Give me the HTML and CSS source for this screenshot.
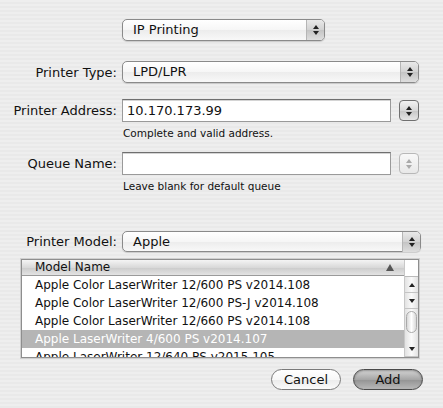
FILE: index.html
```html
<!DOCTYPE html>
<html>
<head>
<meta charset="utf-8">
<link rel="stylesheet" href="styles.css">
</head>
<body>
<div class="sheet">
  <div class="top">
    <div class="popup popup-top"><span class="popup-text">IP Printing</span><span class="popup-arrows"><i class="up"></i><i class="down"></i></span></div>
  </div>

  <div class="row row-type">
    <label class="lbl">Printer Type:</label>
    <div class="popup popup-wide"><span class="popup-text">LPD/LPR</span><span class="popup-arrows"><i class="up"></i><i class="down"></i></span></div>
  </div>

  <div class="row row-addr">
    <label class="lbl">Printer Address:</label>
    <div class="field">10.170.173.99</div>
    <div class="stepper"><i class="up"></i><i class="down"></i></div>
  </div>
  <div class="hint hint-addr">Complete and valid address.</div>

  <div class="row row-queue">
    <label class="lbl">Queue Name:</label>
    <div class="field"></div>
    <div class="stepper disabled"><i class="up"></i><i class="down"></i></div>
  </div>
  <div class="hint hint-queue">Leave blank for default queue</div>

  <div class="row row-model">
    <label class="lbl">Printer Model:</label>
    <div class="popup popup-model"><span class="popup-text">Apple</span><span class="popup-arrows"><i class="up"></i><i class="down"></i></span></div>
  </div>

  <div class="list">
    <div class="list-main">
      <div class="list-head"><span>Model Name</span><i class="sort"></i></div>
      <div class="list-rows">
        <div class="list-row">Apple Color LaserWriter 12/600 PS v2014.108</div>
        <div class="list-row">Apple Color LaserWriter 12/600 PS-J v2014.108</div>
        <div class="list-row">Apple Color LaserWriter 12/660 PS v2014.108</div>
        <div class="list-row selected">Apple LaserWriter 4/600 PS v2014.107</div>
        <div class="list-row">Apple LaserWriter 12/640 PS v2015.105</div>
      </div>
    </div>
    <div class="scrollbar">
      <div class="sb-corner"></div>
      <div class="sb-btn"><i class="up"></i></div>
      <div class="sb-btn"><i class="down"></i></div>
      <div class="sb-track"><div class="sb-thumb"></div></div>
      <div class="sb-btn"><i class="down"></i></div>
    </div>
  </div>

  <div class="buttons">
    <button class="btn cancel">Cancel</button>
    <button class="btn add">Add</button>
  </div>
</div>
</body>
</html>
```

FILE: styles.css
```css
* { box-sizing: border-box; }
html, body { margin: 0; padding: 0; }
body {
  width: 443px;
  height: 408px;
  overflow: hidden;
  font-family: "DejaVu Sans", sans-serif;
  font-size: 13px;
  color: #111;
  background: repeating-linear-gradient(to bottom, #eeeeee 0px, #eeeeee 2px, #e9e9e9 2px, #e9e9e9 4px);
}
.sheet { padding-top: 19px; }

.top { padding-left: 122px; }

.popup {
  height: 22px;
  display: flex;
  align-items: center;
  border: 1px solid #8a8a8a;
  border-radius: 5px;
  background: linear-gradient(to bottom, #ffffff 0%, #f6f6f6 50%, #ececec 51%, #f8f8f8 100%);
  box-shadow: 0 1px 1px rgba(0,0,0,0.15);
  position: relative;
}
.popup-text { flex: 1; padding-left: 10px; line-height: 20px; }
.popup-arrows {
  width: 18px;
  height: 20px;
  border-left: 1px solid #b5b5b5;
  border-radius: 0 4px 4px 0;
  background: linear-gradient(to bottom, #e9e9e9 0%, #d2d2d2 50%, #c4c4c4 51%, #dedede 100%);
  display: flex;
  flex-direction: column;
  align-items: center;
  justify-content: center;
  gap: 2px;
}
.popup-top { width: 203px; }
.popup-wide { width: 297px; }
.popup-model { width: 299px; height: 21px; }

i.up, i.down { display: block; width: 0; height: 0; border-left: 3px solid transparent; border-right: 3px solid transparent; }
i.up { border-bottom: 4px solid #222; }
i.down { border-top: 4px solid #222; }

.row { display: flex; align-items: center; }
.lbl { width: 122px; padding-right: 5px; text-align: right; white-space: nowrap; }
.row-type { margin-top: 20px; }
.row-addr { margin-top: 16px; }
.row-queue { margin-top: 11px; }
.row-model { margin-top: 37px; }

.field {
  width: 269px;
  height: 23px;
  background: #fff;
  border: 1px solid #9a9a9a;
  border-top-color: #6f6f6f;
  box-shadow: inset 0 1px 0 #d4d4d4;
  padding: 3px 0 0 4px;
  line-height: 16px;
}
.stepper {
  margin-left: 8px;
  width: 20px;
  height: 21px;
  border: 1px solid #707070;
  border-radius: 4px;
  background: linear-gradient(to bottom, #f2f2f2 0%, #d8d8d8 50%, #c6c6c6 51%, #e6e6e6 100%);
  display: flex;
  flex-direction: column;
  align-items: center;
  justify-content: center;
  gap: 2px;
}
.stepper.disabled { border-color: #b8b8b8; background: linear-gradient(to bottom, #f8f8f8, #e8e8e8); }
.stepper.disabled i.up { border-bottom-color: #aaa; }
.stepper.disabled i.down { border-top-color: #aaa; }

.hint { padding-left: 123px; font-size: 10.5px; line-height: 15px; color: #111; }
.hint-addr { margin-top: 4px; }
.hint-queue { margin-top: 4px; }

.list {
  margin: 7px 0 0 21px;
  width: 398px;
  height: 99px;
  border: 1px solid #8e8e8e;
  box-shadow: 0 0 0 1px #cfcfcf;
  background: #fff;
  display: flex;
  overflow: hidden;
}
.list-main { flex: 1; overflow: hidden; }
.list-head {
  height: 16px;
  display: flex;
  align-items: center;
  padding-left: 13px;
  padding-right: 10px;
  background: linear-gradient(to bottom, #f4f4f4 0%, #d9d9d9 50%, #cbcbcb 51%, #e3e3e3 100%);
  border-bottom: 1px solid #9a9a9a;
  font-size: 12px;
  line-height: 15px;
}
.list-head span { flex: 1; }
.sort { display: block; width: 0; height: 0; border-left: 4px solid transparent; border-right: 4px solid transparent; border-bottom: 7px solid #555; }
.list-row { height: 18px; line-height: 18px; padding-left: 13px; white-space: nowrap; font-size: 12px; }
.list-row.selected { background: #b5b5b5; color: #fff; }

.scrollbar { width: 14px; display: flex; flex-direction: column; border-left: 1px solid #c8c8c8; background: linear-gradient(to right, #e2e2e2, #fafafa 50%, #e2e2e2); }
.sb-corner { height: 17px; background: #fff; border-bottom: 1px solid #bbb; }
.sb-btn { height: 16px; display: flex; align-items: center; justify-content: center; border-bottom: 1px solid #c4c4c4; }
.sb-track { flex: 1; padding: 2px 1px; }
.sb-thumb { height: 22px; border-radius: 6px; border: 1px solid #aaa; background: linear-gradient(to right, #d8d8d8, #ffffff 50%, #d8d8d8); }

.buttons { display: flex; justify-content: flex-end; gap: 12px; padding-right: 20px; margin-top: 11px; }
.btn {
  font-family: "DejaVu Sans", sans-serif;
  font-size: 13px;
  height: 21px;
  width: 70px;
  border-radius: 11px;
  border: 1px solid #7a7a7a;
  padding: 0;
  color: #111;
}
.cancel { background: linear-gradient(to bottom, #ffffff 0%, #f7f7f7 50%, #ebebeb 51%, #fafafa 100%); }
.add { border-color: #4a4a4a; background: linear-gradient(to bottom, #d4d4d4 0%, #a6a6a6 50%, #939393 51%, #b8b8b8 100%); box-shadow: inset 0 1px 2px rgba(0,0,0,0.3); }
```
